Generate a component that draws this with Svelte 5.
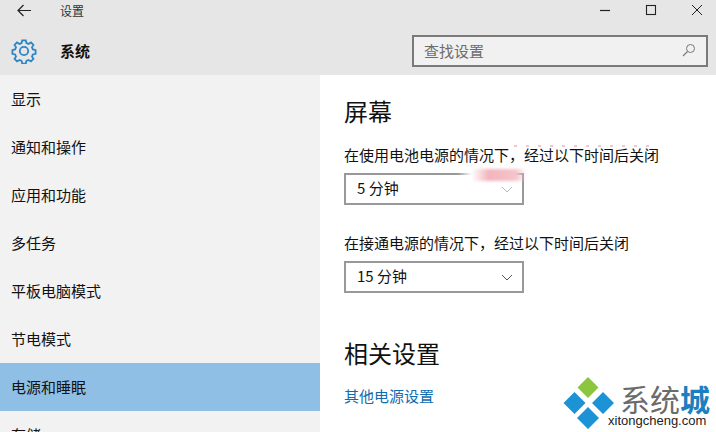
<script>
	const menu = ['显示', '通知和操作', '应用和功能', '多任务', '平板电脑模式', '节电模式', '电源和睡眠', '存储'];
	const active = '电源和睡眠';
</script>

<div class="window">
	<header>
		<div class="titlebar">
			<svg class="back" width="14" height="13" viewBox="0 0 14 13">
				<path d="M6.500 1 1 6.500 6.500 12M1.500 6.500H14" fill="none" stroke="#222" stroke-width="1.2" />
			</svg>
			<span class="title">设置</span>
			<div class="controls">
				<svg width="12" height="12" viewBox="0 0 12 12"><path d="M1 6.500h10" stroke="#222" stroke-width="1.200" /></svg>
				<svg width="12" height="12" viewBox="0 0 12 12"><rect x="1.500" y="1.500" width="9" height="9" fill="none" stroke="#222" stroke-width="1.100" /></svg>
				<svg width="12" height="12" viewBox="0 0 12 12"><path d="M1 1l10 10M11 1 1 11" stroke="#222" stroke-width="1" /></svg>
			</div>
		</div>
		<div class="subbar">
			<svg class="gear" width="26" height="26" viewBox="0 0 26 26">
				<circle cx="13" cy="13" r="4.200" fill="none" stroke="#2b86c5" stroke-width="1.800" />
				<path
					d="M11 2h4l.7 3 2.300 1 2.700-1.600 2.800 2.800L21.900 9.900l1 2.300 3 .8v4l-3 .7-1 2.300 1.600 2.700-2.800 2.800-2.700-1.600-2.300 1-.7 3h-4l-.7-3-2.300-1-2.700 1.600-2.800-2.800 1.600-2.700-1-2.300-3-.7v-4l3-.8 1-2.300-1.600-2.700 2.800-2.800L8 6l2.300-1z"
					transform="translate(1.300 .5) scale(.9)"
					fill="none"
					stroke="#2b86c5"
					stroke-width="2"
				/>
			</svg>
			<strong>系统</strong>
			<div class="search">
				<span>查找设置</span>
				<svg width="14" height="14" viewBox="0 0 14 14">
					<circle cx="8.500" cy="5.500" r="4" fill="none" stroke="#777" />
					<path d="M5.500 8.500 1 13" stroke="#777" stroke-width="1.100" />
				</svg>
			</div>
		</div>
	</header>

	<div class="body">
		<nav>
			{#each menu as item}
				<div class="item" class:active={item === active}>{item}</div>
			{/each}
		</nav>
		<main>
			<h2>屏幕</h2>
			<p class="first">在使用电池电源的情况下，经过以下时间后关闭<i class="specks"></i></p>
			<div class="select">
				<span>5 分钟</span>
				<svg class="faint" width="12" height="7" viewBox="0 0 12 7"><path d="M1 1l5 5 5-5" fill="none" stroke="#555" /></svg>
				<i class="smudge"></i>
			</div>
			<p class="second">在接通电源的情况下，经过以下时间后关闭</p>
			<div class="select">
				<span>15 分钟</span>
				<svg width="12" height="7" viewBox="0 0 12 7"><path d="M1 1l5 5 5-5" fill="none" stroke="#555" /></svg>
			</div>
			<h2 class="related">相关设置</h2>
			<a href="#top">其他电源设置</a>
		</main>
	</div>

	<div class="logo">
		<svg width="54" height="54" viewBox="0 0 54 54">
			<path d="M26 0l10.500 10.500L26 21 15.500 10.500z" fill="#8cc63f" />
			<path d="M12.500 15 23.500 26l-11 11-11-11zM41 15l11 11-11 11-11-11zM26 30l11 11-11 11-11-11z" fill="#1c93d4" />
		</svg>
		<div class="brand">
			<div class="cn">系统<b>城</b></div>
			<div class="en">xitongcheng.com</div>
		</div>
	</div>
</div>

<style>
	:global(body) {
		margin: 0;
		overflow: hidden;
	}
	.window {
		position: relative;
		width: 716px;
		height: 432px;
		overflow: hidden;
		background: #fff;
		color: #111;
		font-family: 'Noto Sans CJK SC', 'Liberation Sans', sans-serif;
	}
	header {
		height: 75px;
		background: #e6e6e6;
	}
	.titlebar {
		display: flex;
		align-items: center;
		height: 20px;
		padding-left: 17px;
		font-size: 12px;
	}
	.title {
		margin-left: 29px;
		color: #333;
	}
	.controls {
		display: flex;
		gap: 34px;
		margin-left: auto;
		padding-right: 13px;
	}
	.subbar {
		display: flex;
		align-items: center;
		height: 48px;
		margin-top: 7px;
		padding: 0 8px 0 11px;
		box-sizing: border-box;
	}
	.subbar strong {
		margin-left: 23px;
		padding-bottom: 2px;
		font-size: 15px;
		font-weight: 700;
	}
	.search {
		display: flex;
		align-items: center;
		justify-content: space-between;
		box-sizing: border-box;
		width: 296px;
		height: 32px;
		margin-left: auto;
		padding: 0 10px 2px 10px;
		border: 2px solid #7a7a7a;
		background: #f1f1f1;
		color: #6d6d6d;
		font-size: 15px;
	}
	.body {
		display: flex;
		height: 357px;
	}
	nav {
		width: 320px;
		background: #f2f2f2;
		font-size: 15px;
	}
	.item {
		display: flex;
		align-items: center;
		box-sizing: border-box;
		height: 48px;
		padding: 0 0 2px 11px;
	}
	.item.active {
		background: #90bfe6;
	}
	main {
		padding: 21px 0 0 24px;
		flex: 1;
	}
	h2 {
		margin: 0;
		font-size: 24px;
		font-weight: 400;
		line-height: 30px;
	}
	p {
		position: relative;
		margin: 19px 0 0;
		font-size: 15px;
		line-height: 20px;
	}
	.second {
		margin-top: 28px;
	}
	.specks {
		position: absolute;
		left: 170px;
		top: 0;
		width: 140px;
		height: 2px;
		background: repeating-linear-gradient(90deg, #e8a0ac 0 3px, #fff0 3px 12px);
		opacity: 0.6;
	}
	.select {
		position: relative;
		display: flex;
		align-items: center;
		justify-content: space-between;
		box-sizing: border-box;
		width: 180px;
		height: 32px;
		margin-top: 8px;
		padding: 0 9px 0 11px;
		border: 2px solid #999;
		font-size: 15px;
	}
	.select span {
		padding-bottom: 4px;
	}
	.select + .second + .select {
		margin-top: 8px;
	}
	.faint {
		opacity: 0.4;
	}
	.smudge {
		position: absolute;
		left: 112px;
		top: -6px;
		width: 68px;
		height: 12px;
		background: linear-gradient(90deg, #fff0, #fff 20%, #f2b4bd 45%, #f4c4cb 85%, #fff0);
		filter: blur(1.5px);
	}
	.related {
		margin-top: 45px;
	}
	a {
		display: block;
		margin-top: 18px;
		color: #0f6cb0;
		font-size: 15px;
		line-height: 20px;
		text-decoration: none;
	}
	.logo {
		position: absolute;
		left: 562px;
		top: 377px;
		display: flex;
		align-items: flex-start;
	}
	.brand {
		margin-top: 6px;
	}
	.cn {
		padding-left: 4px;
		color: #6b6b6b;
		font-size: 30px;
		line-height: 30px;
	}
	.cn b {
		color: #1c7fc0;
		font-weight: 700;
	}
	.en {
		margin-left: -8px;
		color: #222;
		font-family: 'Liberation Sans', sans-serif;
		font-size: 13px;
		line-height: 15px;
	}
</style>
